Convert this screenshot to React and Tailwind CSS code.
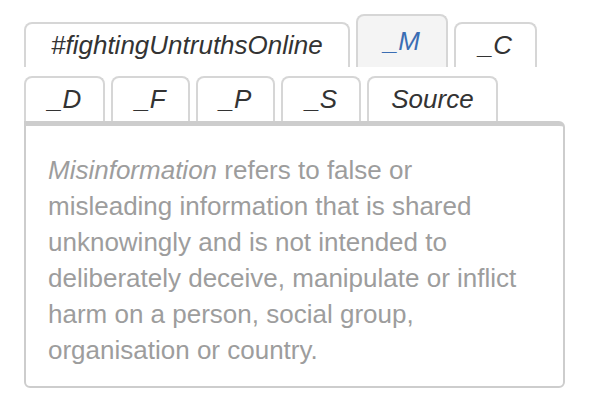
export default function App() {
  const row = [
    { label: "#fightingUntruthsOnline", pad: "px-[25px]" },
    { label: "_M", active: true },
    { label: "_C", pad: "px-[23px]" },
    { label: "_D", pad: "px-[22px]" },
    { label: "_F", pad: "px-[22px]" },
    { label: "_P", pad: "px-[22px]" },
    { label: "_S", pad: "px-[22px]" },
    { label: "Source", pad: "px-[22px]" },
  ];
  return (
    <div
      className="w-[608px] h-[417px] bg-white pt-[14px] pl-[24px]"
      style={{ fontFamily: '"Liberation Sans", Arial, sans-serif' }}
    >
      <div className="w-[541px]">
        <div className="flex flex-wrap items-end gap-x-[6px] gap-y-[9px]">
          {row.map((t) =>
            t.active ? (
              <div
                key={t.label}
                className="h-[53px] px-[26px] flex items-center justify-center border-2 border-b-0 border-[#d6d6d6] rounded-t-[8px] bg-[#f4f4f4] italic text-[26px] text-[#3a6db3]"
              >
                {t.label}
              </div>
            ) : (
              <div
                key={t.label}
                className={`${t.pad} h-[45px] flex items-center justify-center border-2 border-b-0 border-[#d6d6d6] rounded-t-[8px] bg-white italic text-[26px] text-[#333333]`}
              >
                {t.label}
              </div>
            )
          )}
        </div>
        <div className="h-[267px] border-x-2 border-b-2 border-t-[5px] border-[#cdcdcd] rounded-b-[6px] rounded-tr-[6px] px-[22px] pt-[26px] text-[26px] leading-[36px] text-[#9d9d9d]">
          <em>Misinformation</em> refers to false or misleading information that is
          shared unknowingly and is not intended to deliberately deceive,
          manipulate or inflict harm on a person, social group, organisation or
          country.
        </div>
      </div>
    </div>
  );
}
